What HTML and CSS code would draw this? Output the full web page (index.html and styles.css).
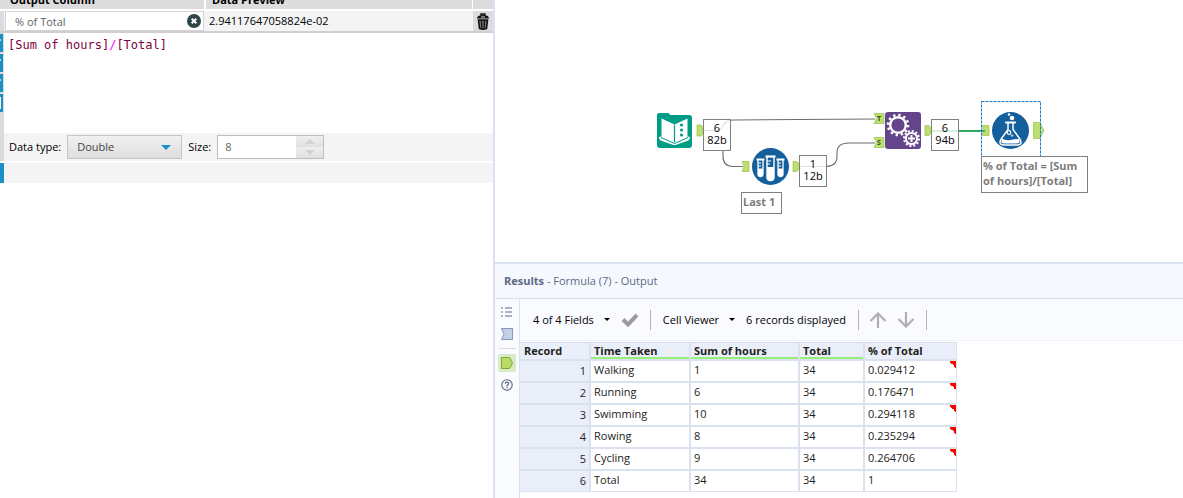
FILE: index.html
```html
<!DOCTYPE html>
<html lang="en">
<head>
<meta charset="utf-8">
<title>Workflow designer</title>
<link rel="stylesheet" href="styles.css">
</head>
<body>
<div class="app">
  <section class="config">
    <div class="grid-head">
      <span class="head-cell"></span>
      <span class="head-cell">Output Column</span>
      <span class="head-cell">Data Preview</span>
      <span class="head-cell"></span>
    </div>
    <div class="grid-row">
      <span class="row-handle"></span>
      <div class="column-box">
        <input class="column-input" type="text" value="% of Total" aria-label="Output column">
        <button class="icon-button" type="button" aria-label="Clear">
          <svg width="14" height="14" viewBox="0 0 14 14"><circle cx="7" cy="7" r="7" fill="#2f4648"/><path d="M4.7 4.7l4.6 4.6M9.3 4.7l-4.6 4.6" stroke="#fff" stroke-width="2"/></svg>
        </button>
      </div>
      <span class="preview">2.94117647058824e-02</span>
      <button class="icon-button trash" type="button" aria-label="Delete">
        <svg width="14" height="17" viewBox="0 0 14 17"><path d="M1 5.500C1 3 4 2 7 2s6 1 6 3.500z" fill="#111"/><path d="M5 2.500V1h4v1.500" fill="none" stroke="#111" stroke-width="1.400"/><path d="M5 4h4" stroke="#ddd"/><path d="M2.500 7l1 8.500q3.500 1.200 7 0l1-8.500z" fill="#777" stroke="#111" stroke-width="1.600"/><path d="M5.500 7l.3 8.500M8.500 7l-.3 8.500" stroke="#111" stroke-width="1.300"/></svg>
      </button>
    </div>
    <div class="editor">
      <div class="tool-strip">
        <span class="tool"></span><span class="tool"></span><span class="tool"></span><span class="tool tool-doc"></span>
      </div>
      <div class="editor-main">
        <code class="formula">[Sum of hours]<span class="operator">/</span>[Total]</code>
        <div class="type-bar">
          <label for="dtype">Data type:</label>
          <div class="select-box">
            <select id="dtype"><option>Double</option></select>
            <svg class="caret" width="10" height="5" viewBox="0 0 10 5"><path d="M0 0h10L5 5z" fill="#1990c6"/></svg>
          </div>
          <label for="size">Size:</label>
          <div class="spinner">
            <input id="size" type="text" value="8">
            <div class="spin-buttons">
              <button type="button" aria-label="Increase"><svg width="10" height="5" viewBox="0 0 10 5"><path d="M0 5h10L5 0z" fill="#d2d2d2"/></svg></button>
              <button type="button" aria-label="Decrease"><svg width="10" height="5" viewBox="0 0 10 5"><path d="M0 0h10L5 5z" fill="#d2d2d2"/></svg></button>
            </div>
          </div>
        </div>
      </div>
    </div>
    <div class="add-row"></div>
  </section>

  <main class="work">
    <section class="canvas">
      <svg class="drawing" width="688" height="262" viewBox="495 0 688 262">
        <g fill="none" stroke="#6c6c6c" stroke-width="1.100">
          <path d="M703 130.500h12c11 0 5-10 18-10.500L875 119"/>
          <path d="M723 150v6q0 10.500 10 10.500h10"/>
          <path d="M799 166.500h26q12 0 12-10v-4q0-9.500 12-9.500h26"/>
        </g>
        <path d="M931 131h52" stroke="#35a85f" stroke-width="1.800"/>
        <g fill="#bcdf70" stroke="#9dbf4e" stroke-width=".7">
          <path d="M697 125h4l2 2.500v6l-2 2.500h-4z"/>
          <path d="M742 161.500h7v10h-7l2-5z"/>
          <path d="M793 161.500h4l2 2.500v5l-2 2.500h-4z"/>
          <path d="M874 113.500h10v10h-10l2.500-5z"/>
          <path d="M874 137.500h10v10h-10l2.500-5z"/>
          <path d="M925 125.500h4l2 2.500v5l-2 2.500h-4z"/>
          <path d="M982 125.500h7v10h-7l1.500-5z"/>
          <path d="M1033.500 122.500h6.500l4 8-4 8h-6.500z"/>
        </g>
        <path d="M977 131h8" stroke="#35a85f" stroke-width="1.800"/>
        <text class="anchor-letter" x="877" y="121">T</text>
        <text class="anchor-letter" x="877" y="145">S</text>

        <path d="M657 115q0-2 2-2h9q1.500 0 2 2h19q3 0 3 3v27q0 3-3 3h-29q-3 0-3-3z" fill="#009d86"/>
        <path d="M661.500 118.500l13 6 13-6v19.500l-13 6.500-13-6.500z" fill="#fff"/>
        <path d="M674.500 124.500v18" stroke="#009d86" stroke-width="1.200"/>
        <path d="M659 137q0 3 3 4l10 3.500q2.500 1 5 0l10-3.500q3-1 3-4l-2-.5-13.500 6-13.500-6z" fill="#fff"/>
        <path d="M661 137.500l13.500 6 13.500-6" fill="none" stroke="#009d86"/>
        <g fill="#009d86"><circle cx="681.500" cy="125" r="1.600"/><circle cx="681.500" cy="130" r="1.600"/><circle cx="681.500" cy="135" r="1.600"/></g>

        <circle cx="770.500" cy="166.500" r="18.500" fill="#155f9c"/>
        <g fill="none" stroke="#fff">
          <path d="M756.500 159.500h8M776.500 159.500h8" stroke-width="2"/>
          <path d="M765.500 156.500h10" stroke-width="2.200"/>
          <path d="M758 160v14q0 2.500 2.500 2.500t2.500-2.500v-14M778 160v14q0 2.500 2.500 2.500t2.500-2.500v-14" stroke-width="1.300"/>
          <path d="M767 157v20.500q0 3 3.500 3t3.500-3V157" stroke-width="1.400"/>
          <path d="M758 163h3M758 166h3M767 161h4M767 164h3M778 163h3M778 166h3"/>
        </g>
        <path d="M758 168.500h5V174q0 2.500-2.500 2.500T758 174zM778 168.500h5V174q0 2.500-2.500 2.500T778 174zM767 167h7v10.500q0 3-3.500 3t-3.500-3z" fill="#fff"/>

        <rect x="885" y="112" width="36" height="37" rx="3" fill="#64458b"/>
        <g fill="none" stroke="#fff">
          <circle cx="898" cy="125" r="7.800" stroke-width="2.400"/>
          <circle cx="898" cy="125" r="10" stroke-width="2.600" stroke-dasharray="2.300 2.936"/>
          <circle cx="911.500" cy="138.500" r="5.600" stroke-width="2"/>
          <circle cx="911.500" cy="138.500" r="7.400" stroke-width="2.200" stroke-dasharray="2 1.874"/>
          <path d="M908 138.500h7M911.500 135v7" stroke-width="2"/>
        </g>

        <circle cx="1010.500" cy="130.500" r="18.500" fill="#155f9c"/>
        <g fill="none" stroke="#fff" stroke-width="1.500">
          <path d="M1006 122.500h9" stroke-width="2.200" stroke-linecap="round"/>
          <path d="M1008 123v6.500l-7.300 10q-2.200 5.500 3 5.500h13.600q5.200 0 3-5.500l-7.300-10V123"/>
          <circle cx="1009" cy="132.500" r="1.800" stroke-width="1.200"/><circle cx="1012" cy="135.500" r=".8" stroke-width=".8"/>
        </g>
        <path d="M1002 138.500q4 2.500 8.500 1.500t8.500-1q2 4.500-2 4.500h-13q-4 0-2-5z" fill="#fff"/>
        <circle cx="1012" cy="118" r="2.300" fill="#fff"/><circle cx="1009" cy="114.500" r="1.200" fill="#fff"/>
        <rect x="981.500" y="101.500" width="59" height="56" fill="none" stroke="#1479cf" stroke-dasharray="3 1"/>
      </svg>
      <div class="count count-input"><span>6</span><span>82b</span></div>
      <div class="count count-sample"><span>1</span><span>12b</span></div>
      <div class="count count-append"><span>6</span><span>94b</span></div>
      <div class="note note-sample">Last 1</div>
      <div class="note note-formula">% of Total = [Sum<br>of hours]/[Total]</div>
    </section>

    <section class="results">
      <header class="results-head"><strong>Results</strong> <span>- Formula (7) - Output</span></header>
      <div class="results-body">
        <nav class="side">
          <button class="icon-button" type="button" aria-label="Messages"><svg width="12" height="10" viewBox="0 0 12 10"><path d="M0 1h2M0 5h2M0 9h2M4 1h7M4 5h7M4 9h7" stroke="#596987" stroke-width="1.200"/></svg></button>
          <button class="icon-button" type="button" aria-label="Input"><svg width="12" height="12" viewBox="0 0 12 12"><path d="M.5.5h11v11H.5L3 6z" fill="#c3cee7" stroke="#8797bd"/></svg></button>
          <hr class="side-rule">
          <button class="icon-button active" type="button" aria-label="Output"><svg width="12" height="12" viewBox="0 0 12 12"><path d="M.5.5H8q.7 0 1 .5L11.500 6 9 11q-.3.5-1 .5H.5z" fill="#b8dc66" stroke="#83a33b"/></svg></button>
          <button class="icon-button" type="button" aria-label="Help"><svg width="12" height="12" viewBox="0 0 12 12" fill="none" stroke="#596987"><circle cx="6" cy="6" r="5.200" stroke-width="1.100"/><path d="M4.300 4.800q0-1.600 1.700-1.600t1.700 1.400q0 .8-1.700 1.800v.8M6 8v1.200" stroke-width="1.200"/></svg></button>
        </nav>
        <div class="output">
          <div class="toolbar">
            <button class="menu" type="button">4 of 4 Fields <svg width="6" height="3" viewBox="0 0 6 3"><path d="M0 0h6L3 3z"/></svg></button>
            <button class="icon-button check" type="button" aria-label="Apply"><svg width="18" height="14" viewBox="0 0 18 14"><path d="M2 6.500l5 5L16 2" fill="none" stroke="#9d9d9d" stroke-width="4"/></svg></button>
            <span class="divider"></span>
            <button class="menu" type="button">Cell Viewer <svg width="6" height="3" viewBox="0 0 6 3"><path d="M0 0h6L3 3z"/></svg></button>
            <span class="records">6 records displayed</span>
            <span class="divider"></span>
            <button class="icon-button" type="button" aria-label="Previous"><svg width="18" height="16" viewBox="0 0 18 16"><path d="M9 16V2M1.500 9L9 1.500 16.500 9" fill="none" stroke="#b0b0b0" stroke-width="2.200"/></svg></button>
            <button class="icon-button next" type="button" aria-label="Next"><svg width="18" height="16" viewBox="0 0 18 16"><path d="M9 0v14M1.500 7L9 14.500 16.500 7" fill="none" stroke="#b0b0b0" stroke-width="2.200"/></svg></button>
            <span class="divider"></span>
          </div>
          <table class="data">
            <colgroup><col class="c-record"><col class="c-time"><col class="c-sum"><col class="c-total"><col class="c-percent"></colgroup>
            <thead><tr><th>Record</th><th class="ok">Time Taken</th><th class="ok">Sum of hours</th><th class="ok">Total</th><th>% of Total</th></tr></thead>
            <tbody>
              <tr><th>1</th><td>Walking</td><td>1</td><td>34</td><td class="flag">0.029412</td></tr>
              <tr><th>2</th><td>Running</td><td>6</td><td>34</td><td class="flag">0.176471</td></tr>
              <tr><th>3</th><td>Swimming</td><td>10</td><td>34</td><td class="flag">0.294118</td></tr>
              <tr><th>4</th><td>Rowing</td><td>8</td><td>34</td><td class="flag">0.235294</td></tr>
              <tr><th>5</th><td>Cycling</td><td>9</td><td>34</td><td class="flag">0.264706</td></tr>
              <tr><th>6</th><td>Total</td><td>34</td><td>34</td><td>1</td></tr>
            </tbody>
          </table>
        </div>
      </div>
    </section>
  </main>
</div>
</body>
</html>
```
FILE: styles.css
```css
* { box-sizing: border-box; }
body { margin: 0; background: #fff; color: #000; font: 11px/16px "Open Sans", "Noto Sans", sans-serif; overflow: hidden; }
button, input, select { font: inherit; color: inherit; margin: 0; padding: 0; border: 0; background: none; outline: 0; }
svg { display: block; }
.app { display: grid; grid-template-columns: 495px 1fr; min-height: 100vh; }
.icon-button { display: flex; align-items: center; justify-content: center; flex: none; }

/* formula configuration */
.config { border-right: 2px solid #dae2f0; }
.grid-head, .grid-row { display: grid; grid-template-columns: 4px 199px 1fr 20px; }
.grid-head { height: 9px; grid-auto-rows: 9px; column-gap: 1px; margin-bottom: 2px; overflow: hidden; align-items: end; }
.head-cell { height: 18px; background: #dcdcdc; padding-left: 5px; font-weight: 700; line-height: 18px; }
.head-cell:nth-child(3) { margin-left: 1px; padding-left: 6px; }
.grid-row { height: 22px; column-gap: 1px; background: #f4f4f4; border-bottom: 2px solid #cfcfcf; }
.row-handle { background: #dcdcdc; }
.column-box { display: flex; align-items: center; background: #fff; border: 1px solid #d4d4d4; padding: 0 2px 0 9px; }
.column-input { flex: 1; min-width: 0; color: #626262; height: 18px; }
.preview { padding-left: 4px; line-height: 20px; }
.trash { background: #dcdcdc; }
.editor { display: flex; }
.tool-strip { display: flex; flex-direction: column; gap: 2px; width: 4px; background: #dcdcdc; padding: 1px 1px 0 0; }
.tool { height: 18px; background: linear-gradient(#b9dded, #b9dded) 0 5px / 1px 2px no-repeat #1990c6; }
.tool-doc { background: linear-gradient(#fff, #fff) 0 3px / 1px 12px no-repeat #1990c6; }
.editor-main { flex: 1; display: flex; flex-direction: column; }
.formula { min-height: 100px; padding: 4px; color: #800040; font: 12px/16px "DejaVu Sans Mono", monospace; }
.operator { color: #f0f; }
.type-bar { display: flex; align-items: center; gap: 6px; height: 28px; padding-left: 5px; background: #f4f4f4; }
.select-box { display: grid; align-items: center; width: 115px; height: 24px; border: 1px solid #c6c6c6; background: linear-gradient(#f1f1f1, #dedede); }
.select-box > * { grid-area: 1 / 1; }
.select-box select { appearance: none; padding-left: 9px; color: #444; width: 100%; height: 22px; }
.caret { justify-self: end; margin-right: 10px; pointer-events: none; }
.spinner { display: flex; width: 107px; height: 24px; border: 1px solid #bebebe; background: #fff; }
.spinner input { flex: 1; min-width: 0; padding-left: 7px; color: #666; }
.spin-buttons { display: grid; grid-template-rows: 1fr 1fr; width: 27px; }
.spin-buttons button { display: flex; align-items: center; justify-content: center; background: linear-gradient(#efefef, #e0e0e0); }
.add-row { height: 20px; margin-top: 2px; background: #f4f4f4; border-left: 4px solid #1990c6; }

/* workflow canvas */
.work { display: flex; flex-direction: column; min-width: 0; }
.canvas { position: relative; height: 262px; overflow: hidden; }
.drawing { position: absolute; left: 0; top: 0; }
.anchor-letter { font: 700 7px "Open Sans", sans-serif; fill: #34502b; }
.count { position: absolute; display: flex; flex-direction: column; align-items: center; width: 28px; height: 32px; border: 1px solid #808080; background: rgba(255, 255, 255, .8); padding-top: 2px; line-height: 12px; }
.count-input { left: 208px; top: 119px; }
.count-sample { left: 304px; top: 155px; }
.count-append { left: 436px; top: 119px; }
.note { position: absolute; border: 1px solid #808080; background: #fff; color: #7c7c7c; padding: 1px; font-weight: 700; line-height: 15px; white-space: nowrap; }
.note-sample { left: 246px; top: 192px; width: 41px; height: 22px; }
.note-formula { left: 486px; top: 156px; width: 107px; height: 37px; }

/* results */
.results { flex: 1; display: flex; flex-direction: column; border-top: 2px solid #dae2f0; }
.results-head { padding: 9px; border-bottom: 1px solid #dae2f0; background: #f5f8fd; color: #5d6a85; }
.results-body { flex: 1; display: flex; }
.side { display: flex; flex-direction: column; align-items: center; gap: 4px; width: 25px; padding-top: 4px; background: #fafbfe; border-right: 1px solid #dae2f0; }
.side .icon-button { width: 18px; height: 18px; }
.side-rule { width: 17px; margin: 1px 0; border: 0; border-top: 1px solid #dcdcdc; }
.side .active { border-radius: 2px; background: #d7ebc7; }
.output { flex: 1; min-width: 0; }
.toolbar { display: flex; align-items: center; height: 42px; padding-left: 13px; background: #fafbfe; border-bottom: 1px solid #eef1f6; margin-bottom: 1px; }
.menu { display: flex; align-items: center; gap: 10px; }
.check { margin: 0 11px; }
.divider { width: 1px; height: 20px; background: #b4b4b4; }
.check + .divider { margin-right: 12px; }
.records { margin: 0 12px 0 11px; }
.records + .divider { margin-right: 10px; }
.next { margin: 0 11px 0 10px; }
.data { table-layout: fixed; width: 437px; border-collapse: separate; border-spacing: 0; border-top: 1px solid #dae2f0; color: #222; }
.c-record { width: 71px; }
.c-time { width: 100px; }
.c-sum { width: 109px; }
.c-total { width: 65px; }
.c-percent { width: 92px; }
.data th, .data td { height: 22px; padding: 0 3px 2px; border: solid #dae2f0; border-width: 0 2px 2px 0; text-align: left; line-height: 18px; }
.data thead th { height: 18px; padding: 0 3px; line-height: 16px; background: #e9eef9; font-weight: 700; }
.data thead th:first-child { padding-left: 4px; }
.data thead .ok { background: linear-gradient(#96f078, #96f078) 0 100% / 100% 2px no-repeat padding-box #e9eef9; }
.data tbody th { padding-bottom: 0; background: #e9eef9; text-align: right; font-weight: 400; }
.data th:last-child, .data td:last-child { border-right-width: 1px; }
.data tbody tr:last-child > * { border-bottom-width: 1px; height: 21px; }
.data .flag { background: linear-gradient(to top right, transparent 50%, #f00 50%) 100% 0 / 7px 7px no-repeat; }
```
